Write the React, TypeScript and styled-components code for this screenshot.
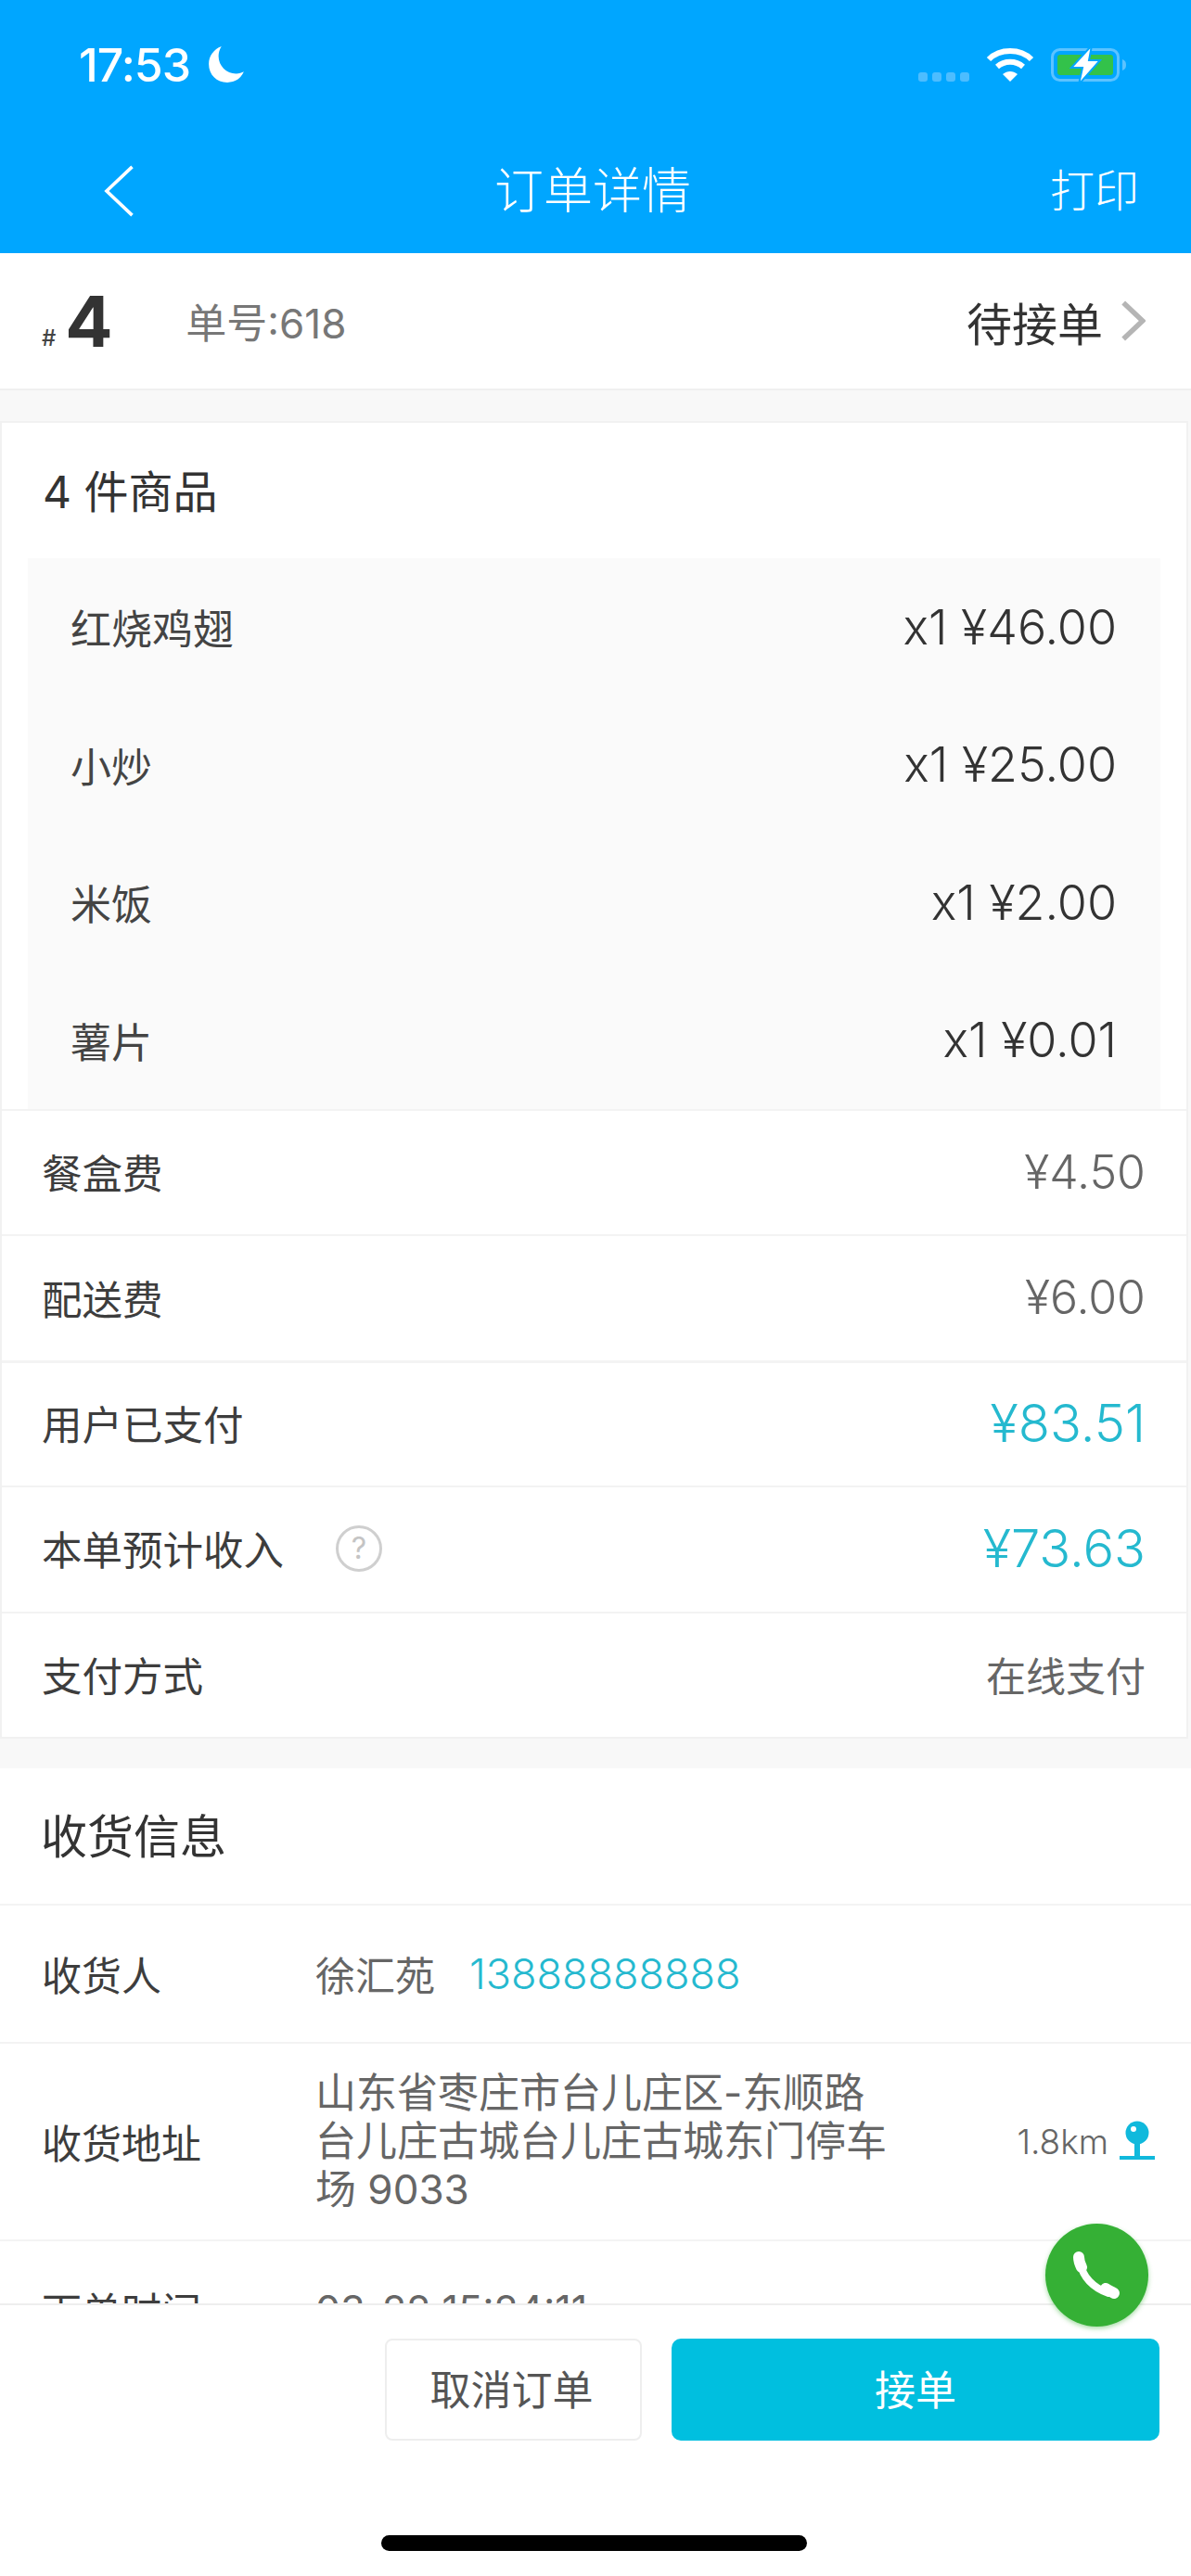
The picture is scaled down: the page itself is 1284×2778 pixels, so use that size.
import React from "react";
import styled, { createGlobalStyle } from "styled-components";

const GlobalStyle = createGlobalStyle`
  html, body {
    margin: 0;
    padding: 0;
    background: #f8f8f8;
  }
  * {
    box-sizing: border-box;
  }
`;

const FONT = `Inter, "Noto Sans CJK SC", sans-serif`;
const TEAL = "#25b9cf";

const Page = styled.div`
  position: relative;
  width: 1284px;
  height: 2778px;
  display: flex;
  flex-direction: column;
  overflow: hidden;
  font-family: ${FONT};
  font-weight: 400;
  color: #333;
`;

const Header = styled.header`
  flex: none;
  height: 273px;
  background: #00a6ff;
  color: #fff;
  display: flex;
  flex-direction: column;
`;

const StatusBar = styled.div`
  height: 140px;
  padding: 46px 69px 0 85px;
  display: flex;
  align-items: flex-start;
  justify-content: space-between;
`;

const Clock = styled.div`
  display: flex;
  align-items: center;
  gap: 18px;
  font-size: 50px;
  line-height: 48px;
  font-weight: 500;
  letter-spacing: -1px;
`;

const StatusIcons = styled.div`
  display: flex;
  align-items: center;
  gap: 18px;
  height: 48px;
`;

const SignalDots = styled.div`
  display: flex;
  gap: 5px;
  align-self: flex-end;
  padding-bottom: 6px;
`;

const Dot = styled.i`
  width: 10px;
  height: 10px;
  border-radius: 3px;
  background: #4dbdff;
`;

const NavBar = styled.nav`
  flex: 1;
  display: grid;
  grid-template-columns: 1fr auto 1fr;
  align-items: center;
  padding: 0 56px 2px 110px;
`;

const NavTitle = styled.h1`
  margin: 0 0 0 -60px;
  font-size: 53px;
  line-height: 70px;
  font-weight: 300;
`;

const NavAction = styled.span`
  justify-self: end;
  font-size: 48px;
  line-height: 70px;
  font-weight: 300;
`;

const OrderBar = styled.section`
  flex: none;
  height: 148px;
  background: #fff;
  border-bottom: 2px solid #f0f0f0;
  padding: 0 49px 0 45px;
  display: flex;
  align-items: center;
`;

const Hash = styled.span`
  font-size: 24px;
  font-weight: 500;
  align-self: flex-end;
  margin-bottom: 40px;
  margin-right: 10px;
  color: #444;
`;

const SerialNo = styled.span`
  font-size: 76px;
  line-height: 72px;
  font-weight: 700;
  width: 130px;
  color: #333;
`;

const OrderNo = styled.span`
  flex: 1;
  font-size: 44px;
  color: #777;
`;

const OrderStatus = styled.span`
  font-size: 49px;
  color: #333;
  margin-right: 20px;
`;

const Scroller = styled.main`
  flex: 1;
  min-height: 0;
  overflow: hidden;
  padding-top: 33px;
`;

const Card = styled.section<{ $framed?: boolean }>`
  background: #fff;
  margin-bottom: 32px;
  margin-right: ${(p) => (p.$framed ? "3px" : "0")};
  border-style: solid;
  border-color: #f1f1f1;
  border-width: ${(p) => (p.$framed ? "2px" : "0")};
`;

const CardTitle = styled.h2<{ $size: number }>`
  margin: 0;
  height: 146px;
  padding: 0 0 5px 44px;
  display: flex;
  align-items: center;
  font-size: ${(p) => p.$size}px;
  font-weight: 400;
  color: #333;
`;

const Goods = styled.ul`
  list-style: none;
  margin: 0 28px;
  padding: 0 47px 0 46px;
  background: #fafafa;
  height: 594px;
  display: flex;
  flex-direction: column;
`;

const GoodsRow = styled.li`
  height: 148.5px;
  display: flex;
  justify-content: space-between;
  align-items: center;
  font-size: 44px;
  color: #444;
`;

const GoodsPrice = styled.span`
  font-size: 52px;
  font-weight: 300;
  color: #333;
`;

const FeeRow = styled.div<{ $strong?: boolean }>`
  height: 135.4px;
  padding: 0 44px 2px 43px;
  display: flex;
  align-items: center;
  justify-content: space-between;
  border-top: ${(p) => (p.$strong ? "3px" : "2px")} solid #f3f3f3;
  font-size: 43.5px;
  color: #3d3d3d;
`;

const FeeLabel = styled.span`
  display: flex;
  align-items: center;
  gap: 56px;
`;

const HelpMark = styled.i`
  width: 50px;
  height: 50px;
  border: 3px solid #cfcfcf;
  border-radius: 50%;
  display: flex;
  align-items: center;
  justify-content: center;
  font-style: normal;
  font-size: 32px;
  color: #c4c4c4;
`;

const FeeValue = styled.span<{ $size: number; $accent?: boolean }>`
  font-size: ${(p) => p.$size}px;
  font-weight: 300;
  color: ${(p) => (p.$accent ? TEAL : "#666")};
`;

const FeeText = styled.span`
  font-size: 43px;
  color: #666;
`;

const InfoRow = styled.div<{ $height: number }>`
  height: ${(p) => p.$height}px;
  border-top: 2px solid #f3f3f3;
  padding: 0 39px 0 45px;
  display: flex;
  align-items: center;
  font-size: 43px;
  color: #3d3d3d;
`;

const InfoLabel = styled.span`
  flex: none;
  width: 295px;
`;

const InfoValue = styled.span`
  display: flex;
  align-items: center;
  gap: 37px;
  color: #666;
  font-size: 43px;
`;

const Phone = styled.span`
  color: ${TEAL};
  font-size: 45px;
  font-weight: 300;
`;

const Address = styled.span`
  flex: none;
  width: 630px;
  color: #666;
  font-size: 44px;
  line-height: 52px;
`;

const Distance = styled.span`
  margin-left: auto;
  display: flex;
  align-items: center;
  gap: 12px;
  font-size: 37px;
  font-weight: 300;
  color: #666;
`;

const Footer = styled.footer`
  flex: none;
  height: 294px;
  background: #fff;
  border-top: 2px solid #eee;
  padding: 36px 34px 0 0;
  display: flex;
  flex-direction: column;
`;

const FooterButtons = styled.div`
  display: flex;
  justify-content: flex-end;
  gap: 32px;
`;

const GhostButton = styled.button`
  width: 277px;
  height: 110px;
  padding: 0 4px 4px 0;
  border: 2px solid #eee;
  border-radius: 8px;
  background: #fff;
  font: inherit;
  font-size: 44px;
  color: #555;
`;

const PrimaryButton = styled.button`
  width: 526px;
  height: 110px;
  padding: 0 0 4px;
  border: 0;
  border-radius: 10px;
  background: #00bfdf;
  font: inherit;
  font-size: 44px;
  color: #fff;
`;

const HomeBar = styled.div`
  width: 459px;
  height: 17px;
  border-radius: 9px;
  background: #000;
  margin: 102px 0 0 411px;
`;

const CallButton = styled.button`
  position: absolute;
  left: 1127px;
  top: 2398px;
  width: 111px;
  height: 111px;
  padding: 0;
  border: 0;
  border-radius: 50%;
  background: #35b035;
  box-shadow: 0 2px 5px rgba(53, 176, 53, 0.45);
`;

const goods = [
  { name: "红烧鸡翅", price: "x1 ¥46.00" },
  { name: "小炒", price: "x1 ¥25.00" },
  { name: "米饭", price: "x1 ¥2.00" },
  { name: "薯片", price: "x1 ¥0.01" },
];

function Moon() {
  return (
    <svg width="42" height="42" viewBox="0 0 40 40" fill="#fff">
      <path d="M15 1C7 4 2 11 2 19c0 11 8 19 19 19 8 0 14-4 17-11-2 1-5 2-8 2-10 0-18-8-18-18 0-3 1-7 3-10z" />
    </svg>
  );
}

function Wifi() {
  return (
    <svg width="52" height="38" viewBox="0 0 52 38" fill="none" stroke="#fff" strokeWidth="6">
      <path d="M3 13C15 1 37 1 49 13" />
      <path d="M12 21c8-7 20-7 28 0" />
      <path d="M26 37l-8-8c5-4 11-4 16 0z" fill="#fff" stroke="none" />
    </svg>
  );
}

function Battery() {
  return (
    <svg width="82" height="40" viewBox="0 0 82 40" fill="none">
      <rect x="1.5" y="3.5" width="71" height="33" rx="8" stroke="#5cc3ff" strokeWidth="3" />
      <rect x="7" y="9" width="60" height="22" rx="3" fill="#33c24a" />
      <path d="M77 14c3 1 4 3 4 6s-1 5-4 6z" fill="#5cc3ff" />
      <path d="M44 -1L22 23h12l-4 18 23-26H41z" fill="#fff" stroke="#00a6ff" strokeWidth="2" />
    </svg>
  );
}

function BackChevron() {
  return (
    <svg width="36" height="58" viewBox="0 0 24 40" fill="none" stroke="#fff" strokeWidth="2.5">
      <path d="M22 2L3 20l19 18" />
    </svg>
  );
}

function StatusChevron() {
  return (
    <svg width="26" height="44" viewBox="0 0 24 40" fill="none" stroke="#b5b5b5" strokeWidth="5">
      <path d="M2 2l19 18L2 38" />
    </svg>
  );
}

function Pin() {
  return (
    <svg width="38" height="44" viewBox="0 0 38 44">
      <circle cx="19" cy="13" r="12.5" fill="#10b9dc" />
      <circle cx="15" cy="9" r="3" fill="#fff" />
      <rect x="16" y="22" width="6" height="18" fill="#10b9dc" />
      <rect x="0" y="38" width="38" height="4" fill="#10b9dc" />
    </svg>
  );
}

function Handset() {
  return (
    <svg width="111" height="111" viewBox="0 0 111 111" fill="none" stroke="#fff" strokeLinecap="round">
      <path d="M38 43c2 14 13 26 30 32" strokeWidth="8" />
      <path d="M36 36c0 2 1 7 3 11" strokeWidth="12" />
      <path d="M65 70c3 2 6 3 9 5" strokeWidth="12" />
    </svg>
  );
}

export default function App() {
  return (
    <Page>
      <GlobalStyle />
      <Header>
        <StatusBar>
          <Clock>
            17:53
            <Moon />
          </Clock>
          <StatusIcons>
            <SignalDots>
              <Dot />
              <Dot />
              <Dot />
              <Dot />
            </SignalDots>
            <Wifi />
            <Battery />
          </StatusIcons>
        </StatusBar>
        <NavBar>
          <BackChevron />
          <NavTitle>订单详情</NavTitle>
          <NavAction>打印</NavAction>
        </NavBar>
      </Header>

      <OrderBar>
        <Hash>#</Hash>
        <SerialNo>4</SerialNo>
        <OrderNo>单号:618</OrderNo>
        <OrderStatus>待接单</OrderStatus>
        <StatusChevron />
      </OrderBar>

      <Scroller>
        <Card $framed>
          <CardTitle $size={48}>4 件商品</CardTitle>
          <Goods>
            {goods.map((item) => (
              <GoodsRow key={item.name}>
                <span>{item.name}</span>
                <GoodsPrice>{item.price}</GoodsPrice>
              </GoodsRow>
            ))}
          </Goods>
          <FeeRow>
            餐盒费
            <FeeValue $size={50}>¥4.50</FeeValue>
          </FeeRow>
          <FeeRow>
            配送费
            <FeeValue $size={50}>¥6.00</FeeValue>
          </FeeRow>
          <FeeRow $strong>
            用户已支付
            <FeeValue $size={56} $accent>
              ¥83.51
            </FeeValue>
          </FeeRow>
          <FeeRow>
            <FeeLabel>
              本单预计收入
              <HelpMark>?</HelpMark>
            </FeeLabel>
            <FeeValue $size={56} $accent>
              ¥73.63
            </FeeValue>
          </FeeRow>
          <FeeRow>
            支付方式
            <FeeText>在线支付</FeeText>
          </FeeRow>
        </Card>

        <Card>
          <CardTitle $size={50}>收货信息</CardTitle>
          <InfoRow $height={149}>
            <InfoLabel>收货人</InfoLabel>
            <InfoValue>
              徐汇苑
              <Phone>13888888888</Phone>
            </InfoValue>
          </InfoRow>
          <InfoRow $height={213}>
            <InfoLabel>收货地址</InfoLabel>
            <Address>山东省枣庄市台儿庄区-东顺路台儿庄古城台儿庄古城东门停车场 9033</Address>
            <Distance>
              1.8km
              <Pin />
            </Distance>
          </InfoRow>
          <InfoRow $height={149}>
            <InfoLabel>下单时间</InfoLabel>
            <InfoValue>03-22 15:24:11</InfoValue>
          </InfoRow>
        </Card>
      </Scroller>

      <Footer>
        <FooterButtons>
          <GhostButton>取消订单</GhostButton>
          <PrimaryButton>接单</PrimaryButton>
        </FooterButtons>
        <HomeBar />
      </Footer>

      <CallButton aria-label="call">
        <Handset />
      </CallButton>
    </Page>
  );
}
